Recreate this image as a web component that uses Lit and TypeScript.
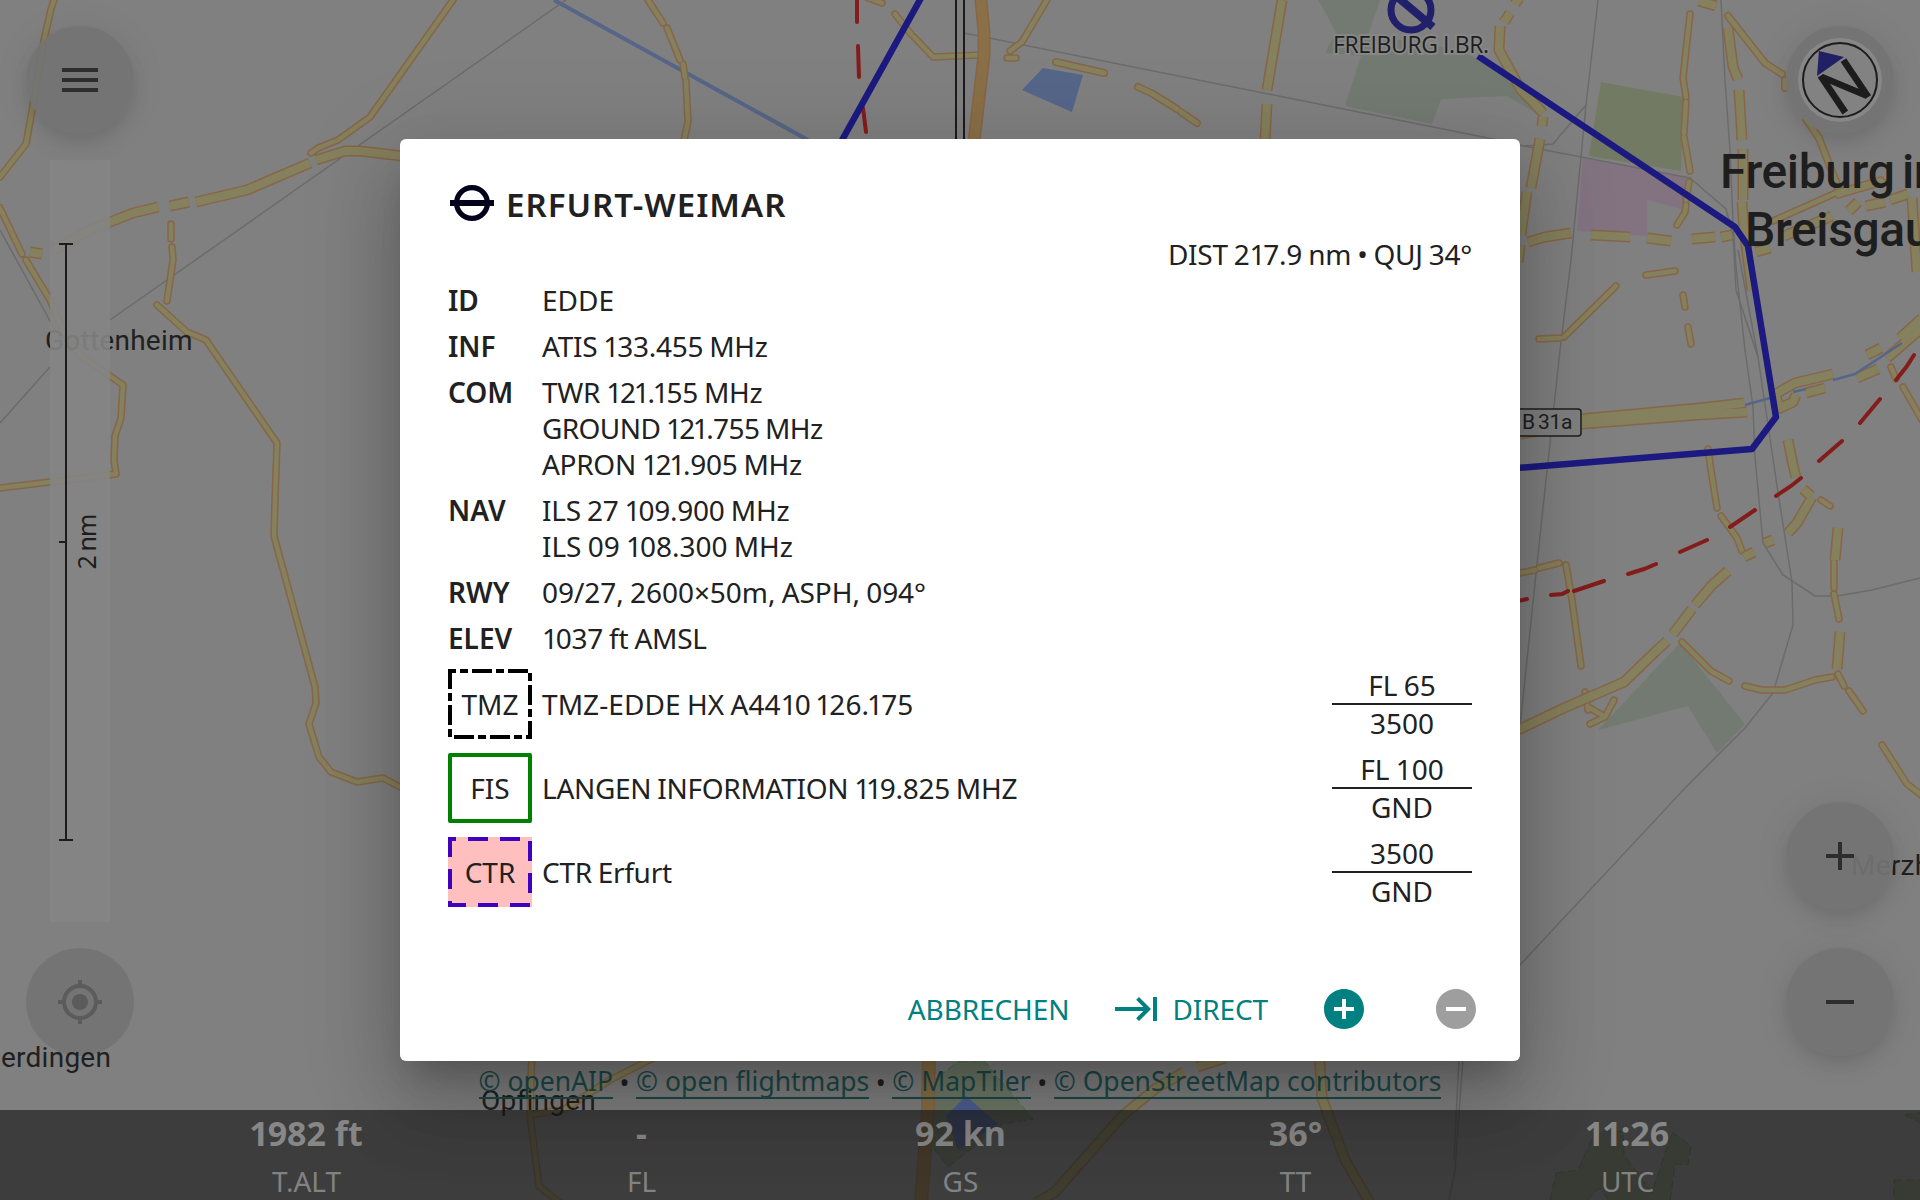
import { LitElement, html, css, svg } from "lit";
import { customElement, property } from "lit/decorators.js";
import { styleMap } from "lit/directives/style-map.js";

type Line = { d: string; w?: number };

/* Yellow secondary roads; w is the width of the fill, the casing adds 3px. */
const ROADS: Line[] = [
  { d: "M54 0L51 9L44 40L33 105L26 144L0 177" },
  { d: "M0 208L22 254" },
  { d: "M26 260L50 300L66 337L80 355L123 385L121 418L115 436L114 460L116 474L0 488" },
  { d: "M453 0L370 117L338 140L318 148L311 153" },
  { d: "M171 224V239M172 247L173 260L167 301" },
  { d: "M157 305L187 332L206 340L277 443L275 500L274 536L315 687L316 703L309 724L319 757L331 772L357 782L383 778L402 788" },
  { d: "M646 -3L663 23M667 28L680 60M683 64L685 77M686 81L688 122L683 145" },
  { d: "M868 -2L882 3M895 14L911 34M914 37L933 57L980 55" },
  { d: "M1048 -2L1022 42L1010 51M1007 58L1016 58" },
  { d: "M1056 62L1104 73M1138 87L1153 94L1177 109M1181 112L1197 123", w: 5 },
  { d: "M1690 14L1683 78L1686 97M1686 102L1684 133M1684 137L1690 171M1689 182L1686 200M1686 205L1685 212L1677 225" },
  { d: "M1728 16L1765 63L1782 74M1785 80V88M1806 119L1819 138L1838 187", w: 5 },
  { d: "M1773 221L1838 192L1881 180M1838 195L1883 182" },
  { d: "M1646 275L1675 271M1616 286L1564 337M1560 338L1539 339M1683 295L1685 307M1688 327L1691 344" },
  { d: "M1708 449L1711 470L1717 508M1721 516L1737 538L1742 551" },
  { d: "M1891 367L1896 379M1903 387L1922 420M1821 500L1830 506" },
  { d: "M1834 562L1834 588M1834 594L1839 619" },
  { d: "M1520 573L1535 570M1539 568L1559 563M1566 565L1572 600L1581 666" },
  { d: "M1682 642L1711 671L1729 681M1745 686L1762 690L1785 690L1815 680L1832 677" },
  { d: "M1838 674L1844 686M1849 691L1863 711M1882 745L1907 784L1924 797" },
  { d: "M1585 692L1588 710M1590 724L1605 717L1614 700M1590 708L1602 715" },
  { d: "M532 1050L530 1115L539 1186L560 1203M530 1115L565 1109L610 1080L665 1052" },
];

const WIDE_ROADS: Line[] = [
  { d: "M30 252L42 254M54 250L90 230L133 213L158 207M170 206L189 202M196 202L247 190L310 163M316 160L345 151L360 151L402 156" },
  { d: "M1282 0L1267 90M1267 104L1265 140" },
  { d: "M1519 -2L1515 4M1510 13L1504 22M1500 26L1499 50L1521 90L1532 101L1543 113M1543 117L1542 126M1540 139L1531 188M1527 192L1522 226L1521 235M1520 245L1518 262" },
  { d: "M1528 242L1545 237L1571 233M1591 235L1630 237M1647 238L1671 241M1692 239L1715 237M1721 237L1732 235" },
  { d: "M1699 1L1716 6" },
  { d: "M1728 28L1733 67L1738 79M1739 90L1742 140M1743 149L1743 200M1742 202L1744 230L1752 290" },
  { d: "M1756 252L1770 248M1784 236L1832 216M1849 211L1858 202M1866 206L1885 202M1890 200L1908 194M1912 198L1917 272" },
  { d: "M1520 434L1582 424L1697 415L1747 412M1580 419L1700 408L1744 403" },
  { d: "M1772 396L1795 383L1833 374M1806 393L1825 388M1775 395L1780 408L1793 402L1796 395M1867 355L1881 348M1857 378L1878 369M1887 358L1922 328M1900 338L1922 318" },
  { d: "M1788 440L1793 465L1796 477M1803 489L1811 496M1812 497L1797 523L1788 533M1765 543L1773 540M1744 557L1754 552" },
  { d: "M1728 571L1712 585L1695 605M1692 609L1673 634M1667 641L1655 652L1624 682L1564 708L1518 730" },
  { d: "M1838 528L1835 560M1840 632L1837 669" },
  { d: "M1225 1058L1197 1067M1184 1072L1155 1089L1122 1116L1055 1192L1036 1203" },
  { d: "M1319 1050L1322 1098L1345 1160L1370 1203" },
];

const TRUNK: Line[] = [
  { d: "M981 0L984 33L984 55L974 142", w: 10 },
  { d: "M929 1050L928 1110L921 1203", w: 11 },
];

const RAILS = [
  "M566 0L110 320M0 230L66 350M50 367L0 423",
  "M964 33L1493 139L1524 146L1690 178L1726 209L1733 235L1736 290L1758 357",
  "M1598 0L1586 105L1571 260L1560 350L1537 564L1527 660L1519 735",
  "M1586 105L1553 144L1525 146",
  "M1721 0L1725 80L1730 150L1733 223L1736 267L1745 350L1753 407L1755 457L1763 543L1783 575L1815 596L1837 596L1872 590L1920 578",
  "M1738 250L1758 357L1777 486L1792 582L1793 625L1773 693L1745 728L1687 786L1519 966",
  "M1463 1058L1455 1170L1449 1200M1459 1058L1454 1160",
];

const DASHES =
  "M857 0V22M858 46L859 77M863 108L866 132M1914 355L1907 366L1896 380M1880 399L1860 423M1842 441L1819 461M1801 478L1791 486L1776 496M1755 510L1730 527M1707 540L1680 552M1656 564L1644 569L1628 574M1604 581L1574 591M1568 591L1562 594L1551 595M1527 599L1518 601";

/* Sets the figure one tighter than the tabular figures around it. */
const figures = (text: string) =>
  text.split(/(1)/).map((part) => (part === "1" ? html`<span class="one">1</span>` : part));

@customElement("map-canvas")
export class MapCanvas extends LitElement {
  static styles = css`
    :host { display: block; }
    svg { display: block; }
    .casing { fill: none; stroke: #866648; stroke-linejoin: round; }
    .fill { fill: none; stroke: #85805d; stroke-linejoin: round; }
    .round { stroke-linecap: round; }
    .trunk.fill { stroke: #8a6f47; }
    .rail { fill: none; stroke: #6b6b6b; stroke-width: 1.5; }
    .stream { fill: none; stroke: #566688; stroke-width: 4; }
    .brook { stroke-width: 2.6; }
    .border { fill: none; stroke: #851c1c; stroke-width: 4; stroke-linecap: round; }
    .zone { fill: none; stroke: #1c1a80; stroke-width: 6.5; stroke-linejoin: round; }
    .place { font-family: Roboto, sans-serif; font-size: 28px; letter-spacing: 0.25px; fill: #202020; }
    .city { font-family: Roboto, sans-serif; font-size: 48px; font-weight: 500; letter-spacing: -0.4px; word-spacing: -4px; fill: #1e1e1e; }
    .field { font-family: "Open Sans", sans-serif; font-size: 23px; fill: #1e1e1e; stroke: #878787; stroke-width: 4; paint-order: stroke; }
    .shield { font-family: Roboto, sans-serif; font-size: 21px; letter-spacing: -0.2px; word-spacing: -2px; fill: #1e1e1e; }
  `;

  private layer(lines: Line[], width: number, extra: string) {
    return svg`
      ${lines.map((l) => svg`<path class="casing ${extra}" stroke-width=${(l.w ?? width) + 3} d=${l.d} />`)}
      ${lines.map((l) => svg`<path class="fill ${extra}" stroke-width=${l.w ?? width} d=${l.d} />`)}`;
  }

  render() {
    return html`<svg width="1920" height="1200" viewBox="0 0 1920 1200">
      <rect width="1920" height="1200" fill="#808080" />
      <path fill="#737a71" d="M1318 0L1336 32L1325 53L1361 56L1345 106L1432 124L1441 99L1507 96L1543 117L1500 72L1460 50L1368 35L1380 0ZM1680 643L1745 724L1717 753L1688 706L1598 730Z" />
      <path fill="#727a64" d="M1601 82L1683 97L1681 171L1589 156Z" />
      <path fill="#837380" d="M1583 158L1690 178L1685 210L1647 200V236L1577 231Z" />
      <path fill="#56668a" d="M1043 68L1083 75L1072 112L1022 90Z" />
      <path fill="#6f7a68" stroke="#4b7050" stroke-dasharray="8 4" d="M959 1061H984L1033 1119L1003 1124L948 1167L930 1144L934 1080Z" />
      <path fill="#4e5f93" d="M966 1096L998 1124L958 1150L946 1116Z" />
      <path fill="#737a69" stroke="#4b7050" stroke-dasharray="8 4" d="M1556 1173L1578 1170L1595 1132L1623 1131L1624 1155L1652 1193L1672 1132L1691 1146L1688 1165L1675 1164L1670 1202H1610L1600 1188L1585 1202H1550ZM1905 1115L1925 1125V1112ZM1894 1180H1925V1205H1894Z" />
      <path class="stream" d="M554 0L808 140" />
      ${RAILS.map((d) => svg`<path class="rail" d=${d} />`)}
      ${this.layer(ROADS, 4.5, "round")}
      ${this.layer(WIDE_ROADS, 8, "")}
      ${this.layer(TRUNK, 10, "round trunk")}
      <path class="stream brook" d="M1745 405L1770 398M1793 392L1806 389M1833 380L1855 374L1902 343" />
      <path class="border" d=${DASHES} />
      <path d="M956 0V140M964 0V140" stroke="#1c1c1c" stroke-width="2" />
      <path class="zone" d="M921 -2L841 142M1478 56L1735 227L1748 246L1776 417L1752 449L1518 468" />
      <g fill="none" stroke="#21206a" stroke-width="7">
        <circle cx="1411" cy="10" r="20" />
        <path d="M1395 -5L1433 27" stroke-width="8" />
      </g>
      <rect x="1500" y="409" width="81" height="27" rx="3" fill="#808080" stroke="#1e1e1e" stroke-width="1.5" />
      <text class="shield" x="1522" y="429">B 31a</text>
      <text class="field" x="1333" y="53" textLength="156">FREIBURG I.BR.</text>
      <text class="city" x="1720" y="188">Freiburg im</text>
      <text class="city" x="1745" y="246">Breisgau</text>
      <text class="place" x="45" y="350">Gottenheim</text>
      <text class="place" x="1" y="1067">erdingen</text>
      <text class="place" x="481" y="1110">Opfingen</text>
      <text class="place" x="1851" y="875">Merzhausen</text>
    </svg>`;
  }
}

@customElement("map-fab")
export class MapFab extends LitElement {
  @property() icon = "";
  @property({ type: Boolean, reflect: true }) flat = false;

  static styles = css`
    :host {
      display: flex; align-items: center; justify-content: center;
      width: 108px; height: 108px; border-radius: 50%;
      background: rgba(115, 115, 115, 0.93);
      box-shadow: 0 6px 10px -2px rgba(0, 0, 0, 0.04), 0 12px 20px rgba(0, 0, 0, 0.06), 0 2px 36px rgba(0, 0, 0, 0.08);
    }
    :host([flat]) { box-shadow: none; background: rgba(0, 0, 0, 0.09); }
    svg { display: block; }
    .dial { font: 400 61px Roboto, sans-serif; fill: #1c1c1c; stroke: #1c1c1c; text-anchor: middle; }
  `;

  render() {
    const ink = "#2d2d2d";
    switch (this.icon) {
      case "menu":
        return html`<svg width="48" height="48" viewBox="0 0 24 24" fill=${ink}><path d="M3 18h18v-2H3v2zm0-5h18v-2H3v2zm0-7v2h18V6H3z" /></svg>`;
      case "locate":
        return html`<svg width="48" height="48" viewBox="0 0 24 24" fill="#5b5b5b"><path d="M12 8c-2.21 0-4 1.79-4 4s1.79 4 4 4 4-1.79 4-4-1.79-4-4-4zm8.94 3A8.994 8.994 0 0 0 13 3.06V1h-2v2.06A8.994 8.994 0 0 0 3.06 11H1v2h2.06A8.994 8.994 0 0 0 11 20.94V23h2v-2.06A8.994 8.994 0 0 0 20.94 13H23v-2h-2.06zM12 19c-3.87 0-7-3.13-7-7s3.13-7 7-7 7 3.13 7 7-3.13 7-7 7z" /></svg>`;
      case "plus":
        return html`<svg width="48" height="48" viewBox="0 0 24 24" fill=${ink}><path d="M19 13h-6v6h-2v-6H5v-2h6V5h2v6h6v2z" /></svg>`;
      case "minus":
        return html`<svg width="48" height="48" viewBox="0 0 24 24" fill=${ink}><path d="M19 13H5v-2h14v2z" /></svg>`;
      default:
        return html`<svg width="84" height="84" viewBox="0 0 84 84">
          <circle cx="42" cy="42" r="42" fill="#878787" />
          <circle cx="42" cy="42" r="37" fill="#828282" stroke="#1c1c1c" stroke-width="2" />
          <path d="M21 13L46 19L19 38Z" fill="#211f66" />
          <text class="dial" transform="translate(46.5 48.5) rotate(-34)" y="21.5">N</text>
        </svg>`;
    }
  }
}

@customElement("scale-bar")
export class ScaleBar extends LitElement {
  static styles = css`
    :host { display: block; width: 60px; height: 762px; background: rgba(132, 132, 132, 0.9); }
    svg { display: block; }
    text { font: 25px "Noto Sans", sans-serif; letter-spacing: -0.9px; word-spacing: -1px; fill: #1c1c1c; text-anchor: middle; }
  `;
  render() {
    return html`<svg width="60" height="762" viewBox="0 0 60 762">
      <path d="M9 84H23M16 84V680M9 680H23M9 382H16" fill="none" stroke="#1c1c1c" stroke-width="2" />
      <text transform="translate(46 382) rotate(-90)">2 nm</text>
    </svg>`;
  }
}

@customElement("airspace-badge")
export class AirspaceBadge extends LitElement {
  @property() kind = "";

  static styles = css`
    :host { display: grid; width: 84px; height: 70px; }
    svg, span { grid-area: 1 / 1; }
    span { place-self: center; }
    rect { fill: none; stroke-width: 4; }
    .TMZ { stroke: #000; stroke-dasharray: 20 4 8 4; stroke-dashoffset: 14; }
    .FIS { stroke: #008000; stroke-linejoin: round; }
    .CTR { stroke: #4000bf; stroke-dasharray: 20 12; stroke-dashoffset: 14; }
    .tint { stroke: none; }
    .tint-CTR { fill: #ffbfbf; }
  `;
  render() {
    return html`<svg width="84" height="70" viewBox="0 0 84 70">
        <rect class="tint tint-${this.kind}" width="84" height="70" />
        <rect class=${this.kind} x="2" y="2" width="80" height="66" />
      </svg><span>${this.kind}</span>`;
  }
}

/* Each text carries its tracking in pixels. */
type Tracked = [string, number];

const FACTS: [string, Tracked[]][] = [
  ["ID", [["EDDE", 0]]],
  ["INF", [["ATIS 133.455 MHz", -0.26]]],
  ["COM", [["TWR 121.155 MHz", -0.27], ["GROUND 121.755 MHz", -0.6], ["APRON 121.905 MHz", -0.3]]],
  ["NAV", [["ILS 27 109.900 MHz", -0.22], ["ILS 09 108.300 MHz", -0.02]]],
  ["RWY", [["09/27, 2600×50m, ASPH, 094°", -0.04]]],
  ["ELEV", [["1037 ft AMSL", -0.25]]],
];

const AIRSPACES: { kind: string; name: Tracked; top: string; bottom: string }[] = [
  { kind: "TMZ", name: ["TMZ-EDDE HX A4410 126.175", 0.07], top: "FL 65", bottom: "3500" },
  { kind: "FIS", name: ["LANGEN INFORMATION 119.825 MHZ", -0.29], top: "FL 100", bottom: "GND" },
  { kind: "CTR", name: ["CTR Erfurt", -0.3], top: "3500", bottom: "GND" },
];

const tracked = ([text, spacing]: Tracked) =>
  html`<div style=${styleMap({ letterSpacing: `${spacing}px` })}>${figures(text)}</div>`;

@customElement("waypoint-dialog")
export class WaypointDialog extends LitElement {
  static styles = css`
    :host {
      display: flex; flex-direction: column; box-sizing: border-box;
      width: 1120px; height: 922px; padding: 46px 48px 2px;
      border-radius: 6px; background: #fff; color: #212121;
      font-size: 28px; line-height: 36px; word-spacing: -1px;
      box-shadow: 0 22px 30px -14px rgba(0, 0, 0, 0.2), 0 48px 76px 6px rgba(0, 0, 0, 0.14), 0 18px 92px 16px rgba(0, 0, 0, 0.12);
    }
    .one { margin: 0 -2px; }
    .one:first-child { margin-left: 0; }
    header { display: flex; align-items: center; height: 40px; gap: 10px; }
    header svg { width: 48px; height: 48px; margin-top: -4px; }
    h1 { margin: 0; font-size: 33px; line-height: 40px; font-weight: 600; letter-spacing: 1px; }
    .meta { margin-top: 11px; text-align: right; }
    .facts { display: grid; grid-template-columns: 84px 1fr; column-gap: 10px; row-gap: 10px; margin-top: 10px; }
    .key { font-weight: 600; }
    .spaces { display: flex; flex-direction: column; gap: 10px; margin-top: 11px; }
    .space { display: flex; align-items: center; gap: 10px; }
    .name { flex: 1; }
    .limits { width: 140px; text-align: center; }
    .upper { border-bottom: 2px solid #212121; }
    .actions { display: flex; align-items: center; justify-content: flex-end; margin-top: auto; height: 100px; color: #008080; letter-spacing: -0.1px; }
    .actions svg { display: block; fill: currentColor; }
    .cancel { margin-right: 44px; }
    .direct { display: flex; align-items: center; gap: 11px; margin-right: 52px; }
    .add { margin-right: 64px; }
    .remove { color: #9e9e9e; margin-right: -8px; }
  `;
  render() {
    return html`
      <header>
        <svg viewBox="0 0 48 48" fill="none" stroke="#02001a">
          <circle cx="24" cy="24" r="15.4" stroke-width="5.2" /><path d="M2 24H46" stroke-width="6" />
        </svg>
        <h1>ERFURT-WEIMAR</h1>
      </header>
      <div class="meta">${tracked(["DIST 217.9 nm • QUJ 34°", -0.25])}</div>
      <div class="facts">
        ${FACTS.map(([key, lines]) => html`<div class="key">${key}</div><div>${lines.map(tracked)}</div>`)}
      </div>
      <div class="spaces">
        ${AIRSPACES.map((a) => html`<div class="space">
          <airspace-badge .kind=${a.kind}></airspace-badge>
          <div class="name">${tracked(a.name)}</div>
          <div class="limits"><div class="upper">${a.top}</div><div>${a.bottom}</div></div>
        </div>`)}
      </div>
      <div class="actions">
        <span class="cancel">ABBRECHEN</span>
        <span class="direct">
          <svg width="48" height="48" viewBox="0 0 24 24"><path d="M11.59 7.41L15.17 11H1v2h14.17l-3.59 3.59L13 18l6-6-6-6-1.41 1.41zM20 6v12h2V6h-2z" /></svg>
          <span>DIRECT</span>
        </span>
        <svg class="add" width="48" height="48" viewBox="0 0 24 24"><path d="M12 2C6.48 2 2 6.48 2 12s4.48 10 10 10 10-4.48 10-10S17.52 2 12 2zm5 11h-4v4h-2v-4H7v-2h4V7h2v4h4v2z" /></svg>
        <svg class="remove" width="48" height="48" viewBox="0 0 24 24"><path d="M12 2C6.48 2 2 6.48 2 12s4.48 10 10 10 10-4.48 10-10S17.52 2 12 2zm5 11H7v-2h10v2z" /></svg>
      </div>`;
  }
}

const CREDITS = ["openAIP", "open flightmaps", "MapTiler", "OpenStreetMap contributors"];
const READOUTS = [["1982 ft", "T.ALT"], ["-", "FL"], ["92 kn", "GS"], ["36°", "TT"], ["11:26", "UTC"]];

@customElement("app-root")
export class AppRoot extends LitElement {
  static styles = css`
    :host {
      display: grid; grid-template: 1200px / 1920px; overflow: hidden;
      font-family: "Noto Sans", "Open Sans", sans-serif;
    }
    map-canvas, .ui, .layer { grid-area: 1 / 1; }
    .ui { display: flex; flex-direction: column; justify-content: space-between; z-index: 1; }
    .tools { display: flex; justify-content: space-between; height: 1110px; box-sizing: border-box; padding: 26px 26px 54px; }
    .side { display: flex; flex-direction: column; align-items: center; justify-content: space-between; }
    .zoom { display: flex; flex-direction: column; gap: 38px; }
    .credits { align-self: flex-end; display: flex; font-size: 26.5px; line-height: 38px; color: #202020; margin: 0 0 -46px; }
    .credit { color: #1d4a4a; border-bottom: 2px solid #1d4a4a; line-height: 35px; height: 33px; }
    .dot { width: 23px; text-align: center; }
    .readouts {
      display: grid; grid-template-columns: 335px 335px 303px 367px 297px; height: 90px; padding-left: 139px;
      background: rgba(25, 25, 25, 0.65); color: #828282; text-align: center;
    }
    .one { margin: 0 -1px; }
    .value { font-size: 34px; font-weight: 700; line-height: 46px; color: #878787; }
    .label { font-size: 28px; line-height: 50px; }
    .layer { z-index: 2; display: flex; justify-content: center; align-items: flex-start; padding-top: 139px; }
  `;
  render() {
    return html`
      <map-canvas></map-canvas>
      <div class="ui">
        <div class="tools">
          <div class="side">
            <map-fab icon="menu"></map-fab>
            <scale-bar></scale-bar>
            <map-fab icon="locate" flat></map-fab>
          </div>
          <div class="credits">
            ${CREDITS.map((c, i) => html`${i ? html`<span class="dot">•</span>` : ""}<span class="credit">© ${c}</span>`)}
          </div>
          <div class="side">
            <map-fab icon="compass"></map-fab>
            <div class="zoom"><map-fab icon="plus"></map-fab><map-fab icon="minus"></map-fab></div>
          </div>
        </div>
        <div class="readouts">
          ${READOUTS.map(([v, l]) => html`<div><div class="value">${figures(v)}</div><div class="label">${l}</div></div>`)}
        </div>
      </div>
      <div class="layer"><waypoint-dialog></waypoint-dialog></div>`;
  }
}
